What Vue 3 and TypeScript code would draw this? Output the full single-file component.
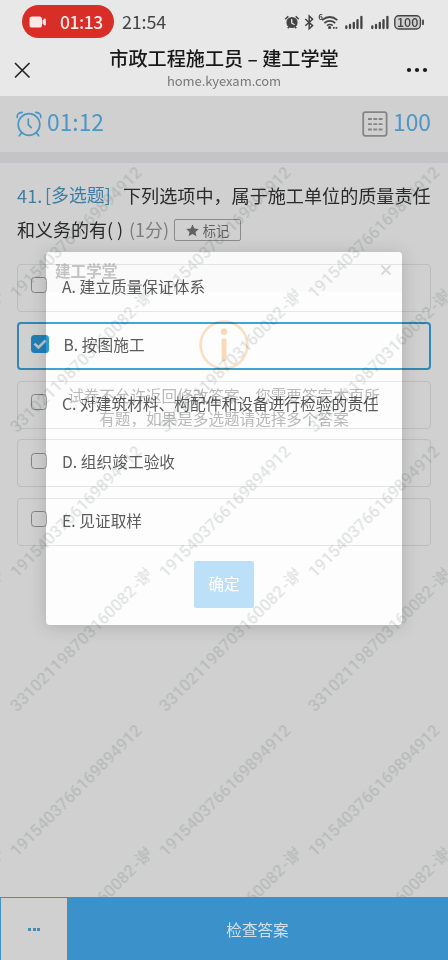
<script setup lang="ts">
import { ref } from 'vue'

interface Option {
  key: string
  text: string
}

const options: Option[] = [
  { key: 'A', text: '建立质量保证体系' },
  { key: 'B', text: '按图施工' },
  { key: 'C', text: '对建筑材料、构配件和设备进行检验的责任' },
  { key: 'D', text: '组织竣工验收' },
  { key: 'E', text: '见证取样' },
]
const selected = ref<string[]>(['B'])

function toggle(key: string) {
  selected.value = selected.value.includes(key)
    ? selected.value.filter((k) => k !== key)
    : [...selected.value, key]
}
</script>

<template>
  <div class="screen">
    <header class="top">
      <div class="status">
        <div class="rec">
          <svg width="18" height="12" viewBox="0 0 18 12" fill="#ffe9e6">
            <rect x="0.5" y="0.5" width="12.5" height="11" rx="2.6" />
            <path d="M13.6 4.3 15.6 2.6Q16.8 2 16.8 3.2V8.8Q16.8 10 15.6 9.4L13.6 7.7Z" />
          </svg>
          <span>01:13</span>
        </div>
        <span class="clock">21:54</span>
        <svg class="sys" width="142" height="20" viewBox="284 11 142 20" fill="none" stroke="#444">
          <circle cx="292" cy="21.5" r="5.6" fill="#444" stroke="none" />
          <path d="M285.3 18.3 288.3 15.2M298.7 18.3 295.7 15.2M287.8 27.2 288.8 26M296.2 27.2 295.2 26" stroke-width="1.6" />
          <path d="M291.7 18V22L294.5 23.7" stroke="#e8e8e8" stroke-width="1.3" />
          <path d="M305.3 18 312.6 24.6 309.2 27.8V15L312.6 18.2 305.3 24.8" stroke-width="1.5" />
          <path d="M322 19.2Q329.8 12.8 337.4 19.2M324.4 22Q329.8 17.6 335.2 22M327 24.6Q329.8 22.4 332.8 24.6" stroke-width="1.7" />
          <circle cx="329.6" cy="26.5" r="1.6" fill="#444" stroke="none" />
          <path d="M333 26.8H334.7M335.6 26.8H337.3" stroke-width="1.7" />
          <path d="M346.3 25.5V27M350 24V27M353.8 21.8V27M357.5 19.2V27M361.4 15.8V27M372.3 25.5V27M376 24V27M379.8 21.8V27M383.5 19.2V27M387.4 15.8V27" stroke-width="2.3" stroke-linecap="round" />
          <rect x="394.8" y="14.8" width="25.6" height="13.2" rx="4" fill="#d0d0d0" stroke-width="1.4" />
          <path d="M423 19.5V23.2" stroke-width="1.8" stroke-linecap="round" />
          <text x="318.2" y="18.8" class="tiny">6</text>
          <text x="407.6" y="25.9" text-anchor="middle" class="battery">100</text>
        </svg>
      </div>
      <div class="nav">
        <svg width="18" height="18" viewBox="0 0 18 18" stroke="#222" stroke-width="1.6">
          <path d="M2 2 16.5 16.5M16.5 2 2 16.5" />
        </svg>
        <div class="heading">
          <h1>市政工程施工员 – 建工学堂</h1>
          <p>home.kyexam.com</p>
        </div>
        <svg width="22" height="6" viewBox="0 0 22 6" fill="#181818">
          <circle cx="3" cy="3" r="2.1" /><circle cx="11" cy="3" r="2.1" /><circle cx="19" cy="3" r="2.1" />
        </svg>
      </div>
    </header>

    <section class="stats">
      <div class="stat">
        <svg width="26" height="26" viewBox="0 0 26 26" fill="none" stroke="#4c97c6" stroke-width="1.7" stroke-linecap="round">
          <circle cx="13" cy="13.5" r="10.8" />
          <path d="M12.3 8V13.7L15.2 16.7M1.2 6.5Q.6 2 6.2 1.4M24.8 6.5Q25.4 2 19.8 1.4M5.2 22.2 3.3 24.8M20.8 22.2 22.7 24.8" />
        </svg>
        <span>01:12</span>
      </div>
      <div class="stat total">
        <svg width="26" height="26" viewBox="0 0 26 26" fill="none" stroke="#858585" stroke-width="1.8">
          <rect x="1.2" y="1.2" width="23.4" height="23.6" rx="2.2" />
          <path d="M6 8H20.5M6 13.2H20.5M6 18.5H20.5" stroke-dasharray="3.9 1.4" />
        </svg>
        <span>100</span>
      </div>
    </section>
    <div class="band"></div>

    <main class="body">
      <div class="question">
        <div class="line first">
          <span class="num">41.</span><span class="kind">[多选题]</span><span class="stem">下列选项中，属于施工单位的质量责任</span>
        </div>
        <div class="line second">
          <span>和义务的有( )</span><span class="score">(1分)</span>
          <button class="mark">
            <svg width="13" height="13" viewBox="0 0 24 24" fill="#777">
              <path d="M12 .8 15.4 8.2 23.5 9.1 17.5 14.6 19.2 22.7 12 18.6 4.8 22.7 6.5 14.6.5 9.1 8.6 8.2Z" />
            </svg>
            <span>标记</span>
          </button>
        </div>
      </div>
      <ul class="options">
        <li
          v-for="o in options"
          :key="o.key"
          class="option"
          :class="{ on: selected.includes(o.key) }"
          @click="toggle(o.key)"
        >
          <span class="box">
            <svg v-if="selected.includes(o.key)" width="14" height="14" viewBox="0 0 14 14" fill="none" stroke="#e4f1f8" stroke-width="2.6">
              <path d="M1.5 6.6 5.5 10.5 12.5 3.5" />
            </svg>
          </span>
          <span class="label">{{ o.key }}. {{ o.text }}</span>
        </li>
      </ul>
    </main>

    <footer class="bar">
      <button class="more"><i></i><i></i><i></i></button>
      <button class="check">检查答案</button>
    </footer>

    <div class="dialog">
      <div class="dialog-head">
        <span>建工学堂</span>
        <svg width="12" height="12" viewBox="0 0 12 12" stroke="#d9d9d9" stroke-width="2.2">
          <path d="M1.5 1.5 10.5 10.5M10.5 1.5 1.5 10.5" />
        </svg>
      </div>
      <svg class="info" width="50" height="50" viewBox="0 0 50 50">
        <circle cx="25" cy="25" r="23.4" fill="none" stroke="#fbdfc2" stroke-width="2.6" />
        <circle cx="25" cy="11.8" r="3.2" fill="#fbd9b6" />
        <rect x="22.6" y="18.5" width="4.8" height="22.5" rx="0.8" fill="#fbd9b6" />
      </svg>
      <p class="msg">试卷不允许返回修改答案，您需要答完本页所<br />有题，如果是多选题请选择多个答案</p>
      <button class="ok">确定</button>
    </div>

    <svg class="watermark" width="448" height="734" viewBox="0 163 448 734">
      <defs>
        <pattern id="wm" x="0.5" y="163" width="149" height="279" patternUnits="userSpaceOnUse">
          <text transform="translate(16.5 136.5) rotate(-45)" textLength="178">1915403766169894912</text>
          <text transform="translate(16.5 270.5) rotate(-45)" textLength="170">331021198703160082</text>
          <text transform="translate(137.7 149.3) rotate(-45)">-谢</text>
        </pattern>
      </defs>
      <rect x="0" y="163" width="448" height="734" fill="url(#wm)" />
    </svg>
  </div>
</template>

<style>
body {
  margin: 0;
}
</style>

<style scoped>
.screen {
  position: relative;
  isolation: isolate;
  width: 448px;
  height: 960px;
  overflow: hidden;
  display: flex;
  flex-direction: column;
  background: #d0d0d0;
  font-family: 'Noto Sans CJK SC', 'Noto Sans', sans-serif;
  color: #333;
}
button {
  font-family: inherit;
  padding: 0;
  margin: 0;
  border: 0;
}
.top {
  height: 96px;
  background: #e8e8e8;
  box-sizing: border-box;
  padding-top: 5px;
}
.status {
  display: flex;
  align-items: center;
  height: 33px;
  padding: 0 22px;
}
.rec {
  width: 92px;
  height: 33px;
  border-radius: 17px;
  background: #d92d27;
  display: flex;
  align-items: center;
  box-sizing: border-box;
  padding-left: 7px;
  gap: 13px;
  color: #ffe9e6;
  font: 500 17.5px/33px 'Noto Sans CJK SC', sans-serif;
}
.rec span {
  letter-spacing: -0.5px;
  margin-top: -1px;
}
.clock {
  margin-left: 8px;
  font-size: 18px;
  line-height: 33px;
  letter-spacing: -0.2px;
  color: #444;
  margin-top: -1px;
}
.sys {
  margin-left: auto;
}
.tiny,
.battery {
  stroke: none;
  fill: #444;
  font-family: 'Noto Sans CJK SC', sans-serif;
  font-weight: 700;
}
.tiny {
  font-size: 8px;
}
.battery {
  font-size: 12.5px;
  font-weight: 500;
}
.nav {
  display: flex;
  align-items: center;
  height: 58px;
  padding: 0 20px 0 13px;
}
.nav > svg {
  margin-top: 6px;
  flex: none;
}
.heading {
  flex: 1;
  text-align: center;
  padding-right: 3px;
  margin-left: 0;
  padding-left: 14px;
}
h1 {
  margin: 0;
  font-size: 19.15px;
  font-weight: 500;
  line-height: 27px;
  color: #181818;
  white-space: nowrap;
}
.heading p {
  margin: 0;
  font-size: 13px;
  line-height: 17px;
  letter-spacing: -0.05px;
  color: #777;
}
.stats {
  height: 56px;
  padding: 0 17px 0 16px;
  display: flex;
  justify-content: space-between;
  align-items: center;
}
.stat {
  display: flex;
  align-items: center;
  gap: 5px;
  color: #4c97c6;
  font-size: 22.8px;
  line-height: 30px;
}
.stat span {
  margin-top: -4px;
}
.band {
  height: 11px;
  background: #c4c4c7;
}
.body {
  position: relative;
  z-index: 2;
  flex: 1;
  padding: 15px 17px 0;
  mix-blend-mode: multiply;
}
.line {
  display: flex;
  align-items: center;
  height: 34px;
  font-size: 18.1px;
  white-space: nowrap;
}
.num,
.kind {
  color: #4c9acb;
}
.num {
  width: 28px;
  letter-spacing: 0.1px;
}
.kind {
  width: 78px;
  font-size: 17.9px;
  margin-top: -3px;
}
.score {
  color: #999;
  margin-left: 5px;
  width: 45px;
}
.second {
  font-size: 18px;
}
.second > span:first-child {
  width: 107px;
}
.mark {
  width: 67px;
  height: 22px;
  box-sizing: border-box;
  border: 1px solid #aaa;
  border-radius: 2px;
  background: transparent;
  display: flex;
  align-items: center;
  justify-content: center;
  gap: 4px;
  font-size: 13.2px;
  color: #777;
  margin-top: 2px;
}
.options {
  list-style: none;
  margin: 1px 0 0;
  padding: 16.5px 0 0;
  display: flex;
  flex-direction: column;
  gap: 10.6px;
}
.option {
  box-sizing: border-box;
  height: 48px;
  border: 1px solid #e8e8e8;
  border-radius: 4px;
  display: flex;
  align-items: center;
  padding: 0 13px;
}
.box {
  box-sizing: border-box;
  width: 16px;
  height: 16px;
  border: 1.5px solid #a0a0a0;
  border-radius: 3.5px;
  margin-top: -5px;
  display: flex;
  align-items: center;
  justify-content: center;
}
.label {
  margin-left: 15px;
  margin-top: -3px;
  font-size: 15.7px;
  letter-spacing: 0.03px;
  color: #5c5c5c;
  white-space: nowrap;
}
.option.on {
  border: 2px solid #3fa5da;
  padding: 0 12px;
}
.on .box {
  width: 18px;
  height: 18px;
  border: 0;
  background: #279cdf;
}
.on .label {
  margin-left: 14.5px;
}
.bar {
  height: 63px;
  display: flex;
  background: #3b92ca;
}
.more {
  width: 66px;
  margin: 1px 0 0 1px;
  background: #d0d0d0;
  display: flex;
  align-items: center;
  justify-content: center;
  gap: 1.5px;
}
.more i {
  width: 3px;
  height: 3px;
  background: #3d8dc0;
}
.check {
  flex: 1;
  background: transparent;
  color: #cfe0ec;
  font-size: 15.6px;
}
.dialog {
  position: absolute;
  z-index: 1;
  left: 46px;
  top: 252px;
  width: 356px;
  height: 373px;
  border-radius: 4px;
  background: #fdfdfd;
  box-shadow: 0 2px 18px rgba(0, 0, 0, 0.16);
  display: flex;
  flex-direction: column;
  align-items: center;
}
.dialog-head {
  align-self: stretch;
  height: 40px;
  box-sizing: border-box;
  padding: 0 10px 5px 9px;
  display: flex;
  align-items: center;
  justify-content: space-between;
  background: #fafafa;
  border-radius: 4px 4px 0 0;
  font-size: 15.6px;
  font-weight: 700;
  color: #c4c4c4;
}
.info {
  margin-top: 28px;
}
.msg {
  margin: 14px 0 0;
  font-size: 15.6px;
  line-height: 23px;
  color: #bababa;
  text-align: center;
  white-space: nowrap;
}
.ok {
  margin-top: 131px;
  width: 60px;
  height: 47px;
  padding-bottom: 3px;
  border-radius: 2px;
  background: #bce0f7;
  color: #fff;
  font-size: 15.6px;
}
.watermark {
  position: absolute;
  z-index: 3;
  left: 0;
  top: 163px;
  pointer-events: none;
}
.watermark text {
  font-family: Roboto, 'Noto Sans CJK SC', sans-serif;
  font-size: 16.6px;
  font-weight: 500;
  fill: rgba(20, 35, 40, 0.13);
}
</style>
